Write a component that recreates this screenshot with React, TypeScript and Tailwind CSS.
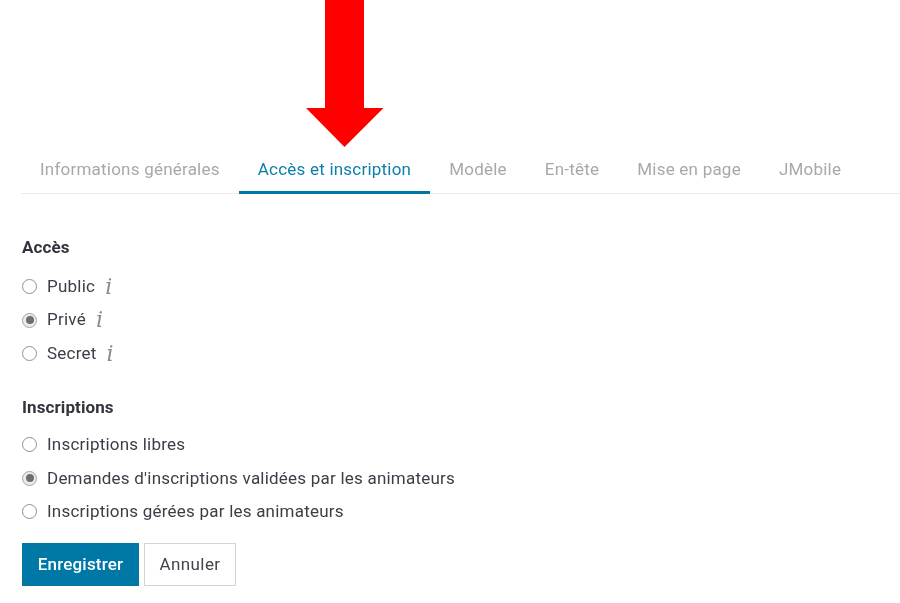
const tabs = ["Informations générales", "Accès et inscription", "Modèle", "En-tête", "Mise en page", "JMobile"];

const Radio = ({ label, checked, info }: { label: string; checked?: boolean; info?: boolean }) => (
  <div className="flex items-center h-[33.5px]">
    {checked ? (
      <span className="w-[15px] h-[15px] rounded-full border-[1.5px] border-[#a3a3a3] bg-[#ececec] flex items-center justify-center">
        <span className="w-[8px] h-[8px] rounded-full bg-[#6e6e6e]" />
      </span>
    ) : (
      <span className="w-[15px] h-[15px] rounded-full border-[1.5px] border-[#8f8f8f] bg-white" />
    )}
    <span className="ml-[10px] text-[#3d3d48] tracking-[0.22px]">{label}</span>
    {info && (
      <span className="ml-[10px] text-[#8c8c8c] text-[22px] italic leading-none font-['DejaVu_Serif',serif]">i</span>
    )}
  </div>
);

const App = () => {
  return (
    <div className="w-[900px] h-[603px] overflow-hidden bg-white font-['Roboto',sans-serif] text-[17px]">
      <div className="h-[147px] pl-[306px]">
        <svg width="78" height="147" viewBox="0 0 78 147">
          <path d="M19 0H58V108H77.5L38.5 147L0 108H19Z" fill="#ff0000" />
        </svg>
      </div>

      <div className="blur-[0.4px]">
        <div className="ml-[21px] h-[47px] flex border-b border-[#ebebeb]">
          {tabs.map((tab, i) => (
            <div
              key={tab}
              className={`h-[47px] px-[19px] pt-[10px] tracking-[0.22px] ${
                i === 1 ? "border-b-[3px] border-[#0078a4] text-[#0d7fa8]" : "text-[#a8a8a8]"
              }`}
            >
              {tab}
            </div>
          ))}
        </div>

        <div className="pl-[22px] pt-[43px]">
          <h3 className="font-bold text-[#33333d] leading-[20px] tracking-[0.1px]">Accès</h3>
          <div className="mt-[12.75px]">
            <Radio label="Public" info />
            <Radio label="Privé" checked info />
            <Radio label="Secret" info />
          </div>

          <h3 className="mt-[26.5px] font-bold text-[#33333d] leading-[20px] tracking-[0.1px]">Inscriptions</h3>
          <div className="mt-[11.25px]">
            <Radio label="Inscriptions libres" />
            <Radio label="Demandes d'inscriptions validées par les animateurs" checked />
            <Radio label="Inscriptions gérées par les animateurs" />
          </div>

          <div className="mt-[14.5px] flex gap-[5px]">
            <button className="w-[117px] h-[43px] bg-[#0078a6] text-white font-medium tracking-[0.2px]">Enregistrer</button>
            <button className="w-[92px] h-[43px] bg-white border border-[#d4d4d4] text-[#44444c] tracking-[0.4px]">Annuler</button>
          </div>
        </div>
      </div>
    </div>
  );
};

export default App;
